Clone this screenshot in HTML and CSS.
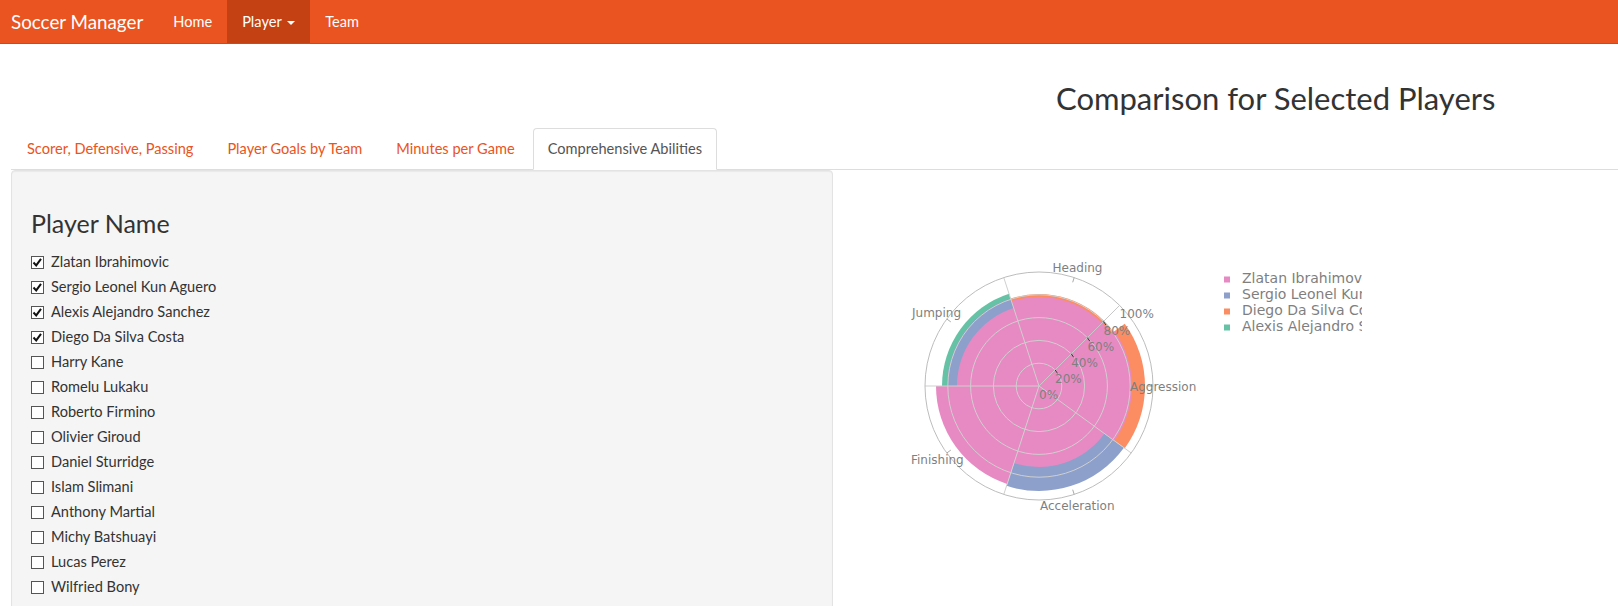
FILE: index.html
```html
<!DOCTYPE html>
<html>
<head>
<meta charset="utf-8">
<title>Soccer Manager</title>
<link rel="stylesheet" href="styles.css">
</head>
<body>
<nav class="navbar">
  <a class="brand">Soccer Manager</a>
  <ul class="nav">
    <li><a>Home</a></li>
    <li class="active"><a>Player <span class="caret"></span></a></li>
    <li><a>Team</a></li>
  </ul>
</nav>
<main class="page">
  <div class="title-row"><h2 class="title">Comparison for Selected Players</h2></div>
  <ul class="tabs">
    <li><a>Scorer, Defensive, Passing</a></li>
    <li><a>Player Goals by Team</a></li>
    <li><a>Minutes per Game</a></li>
    <li class="active"><a>Comprehensive Abilities</a></li>
  </ul>
  <div class="tab-content">
    <div class="well">
      <h3 class="group-label">Player Name</h3>
      <div class="checks">
        <label class="check"><span class="box"><svg class="tick" viewBox="0 0 13 13"><polyline points="2.5,6.5 5.2,9.4 10,2.8"/></svg></span>Zlatan Ibrahimovic</label>
        <label class="check"><span class="box"><svg class="tick" viewBox="0 0 13 13"><polyline points="2.5,6.5 5.2,9.4 10,2.8"/></svg></span>Sergio Leonel Kun Aguero</label>
        <label class="check"><span class="box"><svg class="tick" viewBox="0 0 13 13"><polyline points="2.5,6.5 5.2,9.4 10,2.8"/></svg></span>Alexis Alejandro Sanchez</label>
        <label class="check"><span class="box"><svg class="tick" viewBox="0 0 13 13"><polyline points="2.5,6.5 5.2,9.4 10,2.8"/></svg></span>Diego Da Silva Costa</label>
        <label class="check"><span class="box"></span>Harry Kane</label>
        <label class="check"><span class="box"></span>Romelu Lukaku</label>
        <label class="check"><span class="box"></span>Roberto Firmino</label>
        <label class="check"><span class="box"></span>Olivier Giroud</label>
        <label class="check"><span class="box"></span>Daniel Sturridge</label>
        <label class="check"><span class="box"></span>Islam Slimani</label>
        <label class="check"><span class="box"></span>Anthony Martial</label>
        <label class="check"><span class="box"></span>Michy Batshuayi</label>
        <label class="check"><span class="box"></span>Lucas Perez</label>
        <label class="check"><span class="box"></span>Wilfried Bony</label>
        <label class="check"><span class="box"></span>Jermain Defoe</label>
      </div>
    </div>
    <div class="chart">
      <svg class="polar" width="785" height="436" viewBox="0 0 785 436">
        <defs>
          <clipPath id="legclip"><rect x="385" y="95" width="144" height="80"/></clipPath>
        </defs>
        <g transform="translate(206,216)">
          <!-- bars -->
          <path class="bar green" d="M0 0 L-29.97 -92.26 A97 97 0 0 0 -97 0 Z"/>
          <path class="bar orange" d="M0 0 L85.75 62.31 A106 106 0 0 0 85.75 -62.31 Z"/>
          <path class="bar orange" d="M0 0 L74.43 -54.08 A92 92 0 0 0 -28.43 -87.5 Z"/>
          <path class="bar blue" d="M0 0 L-28.43 -87.5 A92 92 0 0 0 -92 0 Z"/>
          <path class="bar blue" d="M0 0 L-32.45 99.87 A105 105 0 0 0 84.95 61.72 Z"/>
          <path class="bar pink" d="M0 0 L75.24 54.67 A93 93 0 0 0 75.24 -54.67 Z"/>
          <path class="bar pink" d="M0 0 L72 -52.31 A89 89 0 0 0 -27.5 -84.65 Z"/>
          <path class="bar pink" d="M0 0 L-25.34 -77.99 A82 82 0 0 0 -82 0 Z"/>
          <path class="bar pink" d="M0 0 L-103 0 A103 103 0 0 0 -31.83 97.96 Z"/>
          <path class="bar pink" d="M0 0 L-25.03 77.04 A81 81 0 0 0 65.53 47.61 Z"/>
          <!-- grid -->
          <circle class="grid" r="22.8"/>
          <circle class="grid" r="45.6"/>
          <circle class="grid" r="68.4"/>
          <circle class="grid" r="91.2"/>
          <line class="grid" x1="0" y1="0" x2="-35.23" y2="-108.42"/>
          <line class="grid" x1="0" y1="0" x2="-114" y2="0"/>
          <line class="grid" x1="0" y1="0" x2="-35.23" y2="108.42"/>
          <line class="grid" x1="0" y1="0" x2="92.23" y2="67.01"/>
          <circle class="outer" r="114"/>
          <!-- angular ticks -->
          <line class="atick" x1="109" y1="0" x2="114" y2="0"/>
          <line class="atick" x1="33.7" y1="-103.7" x2="35.2" y2="-108.4"/>
          <line class="atick" x1="-88.2" y1="-64.1" x2="-92.2" y2="-67"/>
          <line class="atick" x1="-88.2" y1="64.1" x2="-92.2" y2="67"/>
          <line class="atick" x1="33.7" y1="103.7" x2="35.2" y2="108.4"/>
          <!-- radial axis -->
          <line class="raxis" x1="0" y1="0" x2="80.61" y2="-80.61"/>
          <line class="rtick" x1="16.12" y1="-16.12" x2="18.6" y2="-12.6"/>
          <line class="rtick" x1="32.24" y1="-32.24" x2="34.7" y2="-28.7"/>
          <line class="rtick" x1="48.37" y1="-48.37" x2="50.8" y2="-44.8"/>
          <line class="rtick" x1="64.49" y1="-64.49" x2="67" y2="-61"/>
          <text class="lbl" x="0" y="13">0%</text>
          <text class="lbl" x="16.1" y="-3">20%</text>
          <text class="lbl" x="32.2" y="-19.2">40%</text>
          <text class="lbl" x="48.4" y="-35.4">60%</text>
          <text class="lbl" x="64.5" y="-51.5">80%</text>
          <text class="lbl" x="80.6" y="-67.6">100%</text>
          <!-- angular labels -->
          <text class="lbl" x="38.5" y="-114" text-anchor="middle">Heading</text>
          <text class="lbl" x="91" y="5">Aggression</text>
          <text class="lbl" x="-127" y="-69">Jumping</text>
          <text class="lbl" x="-128" y="78">Finishing</text>
          <text class="lbl" x="1" y="123.5">Acceleration</text>
        </g>
        <g class="legend" clip-path="url(#legclip)">
          <rect class="pink" x="391" y="106.5" width="6" height="6"/>
          <text x="409" y="113.3">Zlatan Ibrahimovic</text>
          <rect class="blue" x="391" y="122.5" width="6" height="6"/>
          <text x="409" y="129.3">Sergio Leonel Kun Aguero</text>
          <rect class="orange" x="391" y="138.5" width="6" height="6"/>
          <text x="409" y="145.3">Diego Da Silva Costa</text>
          <rect class="green" x="391" y="154.5" width="6" height="6"/>
          <text x="409" y="161.3">Alexis Alejandro Sanchez</text>
        </g>
      </svg>
    </div>
  </div>
</main>
</body>
</html>
```
FILE: styles.css
```css
html, body {
  margin: 0;
  padding: 0;
  background: #fff;
}
body {
  font-family: Lato, "Open Sans", sans-serif;
  font-size: 14.6px;
  color: #333;
  overflow: hidden;
  height: 606px;
}
a { cursor: pointer; }

.navbar {
  height: 44px;
  box-sizing: border-box;
  background: #e95420;
  border-bottom: 1px solid #d34615;
  display: flex;
  align-items: stretch;
}
.brand {
  font-size: 18.8px;
  line-height: 43px;
  color: #fff;
  padding: 0 15px 0 11px;
}
.nav {
  display: flex;
  list-style: none;
  margin: 0;
  padding: 0;
}
.nav a {
  display: block;
  line-height: 43px;
  padding: 0 15px;
  color: #fff;
}
.nav .active a {
  background: #c34113;
}
.caret {
  display: inline-block;
  width: 0;
  height: 0;
  margin-left: 2px;
  vertical-align: middle;
  border-top: 4px solid #fff;
  border-left: 4px solid transparent;
  border-right: 4px solid transparent;
}

.page {
  padding-left: 11px;
}
.title-row {
  height: 84px;
  box-sizing: border-box;
  padding: 38px 0 0 1045px;
}
.title {
  margin: 0;
  font-size: 31px;
  font-weight: 400;
  line-height: 33px;
  color: #333;
  white-space: nowrap;
}

.tabs {
  display: flex;
  list-style: none;
  margin: 0;
  padding: 0;
  border-bottom: 1px solid #ddd;
}
.tabs li {
  margin-bottom: -1px;
}
.tabs a {
  display: block;
  padding: 10px 15px;
  line-height: 20px;
  margin-right: 2px;
  border: 1px solid transparent;
  border-radius: 4px 4px 0 0;
  color: #e95420;
}
.tabs .active a {
  color: #555;
  background: #fff;
  border-color: #ddd;
  border-bottom-color: transparent;
  padding-left: 14px;
  padding-right: 14px;
}

.tab-content {
  display: flex;
  align-items: flex-start;
}
.well {
  flex: 0 0 822px;
  box-sizing: border-box;
  min-height: 600px;
  padding: 19px;
  background: #f5f5f5;
  border: 1px solid #e3e3e3;
  border-radius: 4px;
  box-shadow: inset 0 1px 1px rgba(0,0,0,.05);
}
.group-label {
  margin: 20px 0 16px;
  font-size: 25px;
  font-weight: 400;
  line-height: 26px;
  color: #333;
}
.checks {
  display: flex;
  flex-direction: column;
  gap: 5px;
}
.check {
  display: flex;
  align-items: center;
  height: 20px;
  line-height: 20px;
}
.box {
  flex: 0 0 auto;
  width: 13px;
  height: 13px;
  box-sizing: border-box;
  border: 1px solid #555;
  background: #fff;
  margin-right: 7px;
  position: relative;
}
.tick {
  position: absolute;
  left: -1px;
  top: -1px;
  width: 13px;
  height: 13px;
}
.tick polyline {
  fill: none;
  stroke: #111;
  stroke-width: 2;
}

.chart {
  flex: 1 1 auto;
}
.polar {
  display: block;
}
.bar { stroke: none; }
.pink { fill: #e78ac3; }
.blue { fill: #8da0cb; }
.orange { fill: #fc8d62; }
.green { fill: #66c2a5; }
.grid {
  fill: none;
  stroke: #cfcfcf;
  stroke-width: 1;
}
.outer {
  fill: none;
  stroke: #bdbdbd;
  stroke-width: 1;
}
.atick {
  stroke: #aaa;
  stroke-width: 1;
}
.raxis {
  stroke: #c8c8c8;
  stroke-width: 1;
}
.rtick {
  stroke: #333;
  stroke-width: 1;
}
.lbl {
  font-family: "DejaVu Sans", Verdana, sans-serif;
  font-size: 12px;
  fill: #7f7f7f;
}
.legend text {
  font-family: "DejaVu Sans", Verdana, sans-serif;
  font-size: 14px;
  fill: #7f7f7f;
}
```
